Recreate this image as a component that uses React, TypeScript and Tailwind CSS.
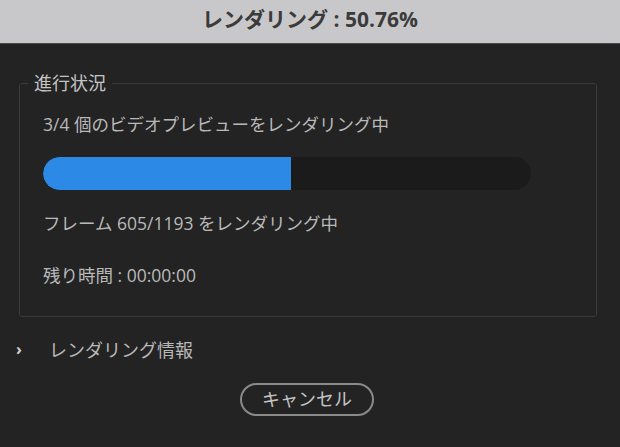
import React from "react";

const font = { fontFamily: '"Open Sans", "Noto Sans CJK JP", sans-serif' };

const App = () => {
  const progress = 50.76;

  return (
    <div
      className="flex h-[447px] w-[620px] flex-col overflow-hidden bg-[#232323]"
      style={font}
    >
      <div className="flex h-[44px] shrink-0 items-center justify-center border-b border-[#4a4a4a] bg-[#c8c8ca] pb-[3px]">
        <span className="text-[21px] font-bold text-[#3b3b3b]">
          レンダリング : {progress}%
        </span>
      </div>

      <div className="flex flex-1 flex-col">
        <fieldset className="ml-[19px] mr-[23px] mt-[27px] h-[246px] rounded-[3px] border border-[#3a3a3a] px-0">
          <legend className="ml-[8px] px-[6px] text-[18px] leading-[24px] text-[#c4c4c4]">
            進行状況
          </legend>
          <div className="pl-[23px]">
            <p className="mt-[17px] text-[17.5px] leading-[24px] text-[#b9b9b9]">
              3/4 個のビデオプレビューをレンダリング中
            </p>
            <div className="mt-[21px] h-[33px] w-[488px] overflow-hidden rounded-full bg-[#1b1b1b]">
              <div
                className="h-full rounded-l-full bg-[#2d89e6]"
                style={{ width: `${progress}%` }}
              />
            </div>
            <p className="mt-[21px] text-[17.5px] leading-[24px] text-[#b9b9b9]">
              フレーム 605/1193 をレンダリング中
            </p>
            <p className="mt-[28px] text-[17.5px] leading-[24px] text-[#b9b9b9]">
              残り時間 : 00:00:00
            </p>
          </div>
        </fieldset>

        <div className="mt-[21px] flex h-[24px] items-center pl-[16px] text-[#b9b9b9]">
          <span className="w-[33px] pb-[2px] text-[16px] font-bold leading-[24px] text-[#d0d0d0]">›</span>
          <span className="text-[18px] leading-[24px]">レンダリング情報</span>
        </div>

        <div className="mt-[21px] flex justify-center">
          <button className="h-[33px] w-[134px] -translate-x-[3px] rounded-full border-2 border-[#8a8a8a] text-[18px] text-[#c4c4c4]">
            キャンセル
          </button>
        </div>
      </div>
    </div>
  );
};

export default App;
